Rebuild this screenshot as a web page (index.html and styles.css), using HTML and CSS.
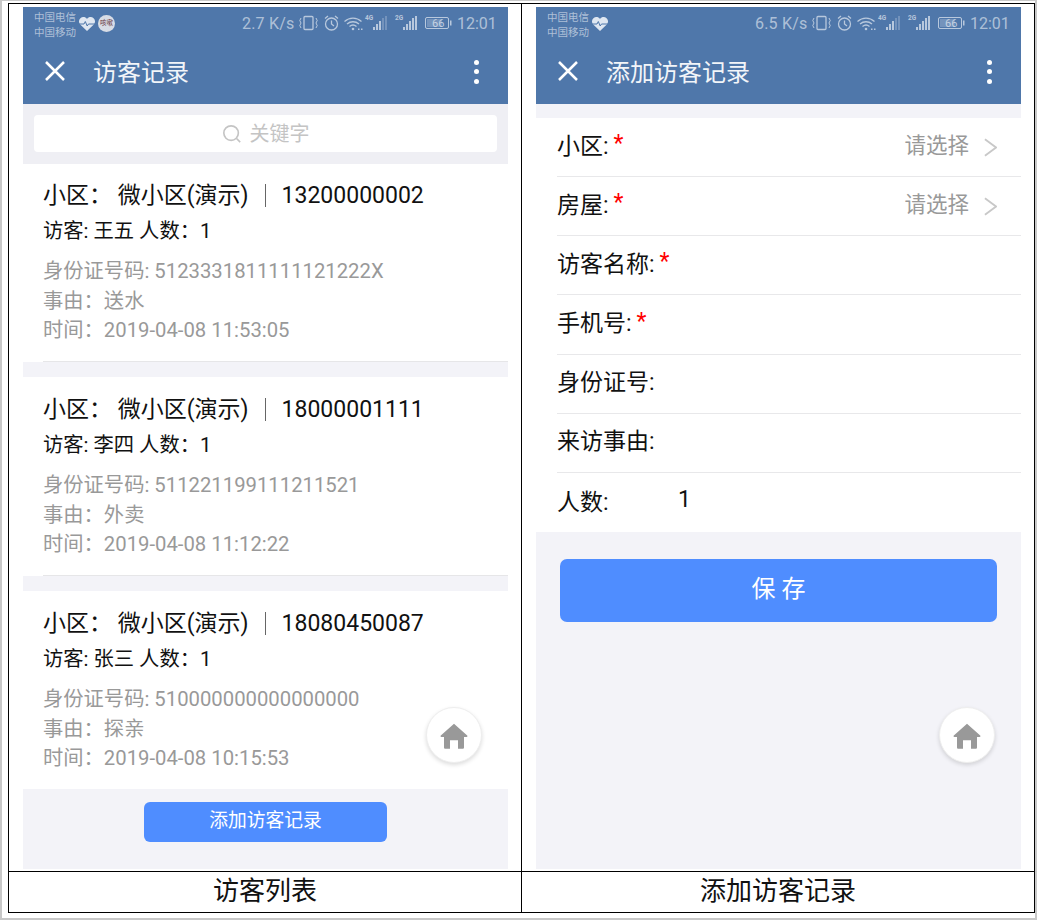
FILE: index.html
```html
<!DOCTYPE html>
<html lang="en">
<head>
    <meta charset="UTF-8">
    <meta name="viewport" content="width=device-width, initial-scale=1.0">
    <title>访客记录</title>
    <link rel="stylesheet" href="styles.css">
</head>
<body>
    <svg class="defs" width="0" height="0">
        <symbol id="i-heart" viewBox="0 0 16 14">
            <path d="M8 14 1.2 7.4C-.6 5.500-.3 2.600 1.400 1.200 3.400-.5 6.500-.2 8 2c1.500-2.200 4.600-2.500 6.600-.8 1.700 1.400 2 4.300.2 6.200z" fill="#dfe7f1"/>
            <path d="M0 7h5l1.300-2.500L8.200 9l1.300-2H16" fill="none" stroke="#4f77aa" stroke-width="1"/>
        </symbol>
        <symbol id="i-status" viewBox="0 0 153 20">
            <!-- vibrate -->
            <rect x="5" y="3.500" width="9" height="13" rx="1" fill="none" stroke="currentColor" stroke-width="1.300"/>
            <path d="M2 5 .8 7.500 2 10 .8 12.500 2 15M17 5l1.200 2.500L17 10l1.200 2.500L17 15" fill="none" stroke="currentColor"/>
            <!-- alarm -->
            <circle cx="32.500" cy="11" r="6" fill="none" stroke="currentColor" stroke-width="1.300"/>
            <path d="M32.500 7.500V11l2.500 2M26 5.500 29 3M39 5.500 36 3" fill="none" stroke="currentColor" stroke-width="1.300"/>
            <!-- wifi -->
            <path d="M45.500 8.500c5-4.500 12-4.500 17 0M48 11c3.500-3 8.500-3 12 0M50.500 13.500c2-1.700 5-1.700 7 0" fill="none" stroke="currentColor" stroke-width="1.300"/>
            <circle cx="54" cy="16" r="1.300" fill="currentColor"/>
            <path d="M59 15.500h1.500v1.500H59zM62 15.500h1.500v1.500H62z" fill="currentColor"/>
            <!-- 4G signal -->
            <path d="M74 14h2v3h-2zM77 11h2v6h-2zM80 8h2v9h-2z" fill="currentColor"/>
            <path d="M83 5h2v12h-2zM86 3h2v14h-2z" fill="currentColor" opacity=".35"/>
            <!-- 2G signal -->
            <path d="M104 14h2v3h-2zM107 11h2v6h-2zM110 8h2v9h-2zM113 5h2v12h-2zM116 3h2v14h-2z" fill="currentColor"/>
            <!-- battery -->
            <rect x="126.500" y="4.500" width="23" height="11" rx="1.500" fill="none" stroke="currentColor"/>
            <rect x="128" y="6" width="15" height="8" fill="currentColor" opacity=".35"/>
            <rect x="151" y="7.500" width="1.500" height="5" fill="currentColor"/>
        </symbol>
        <symbol id="i-home" viewBox="0 0 28 26">
            <path d="M14 .8 27.200 12.600c.6.600.2 1.400-.6 1.400H24v10.500c0 .8-.6 1.300-1.300 1.300H18v-8.500h-8v8.500H5.300C4.600 25.800 4 25.300 4 24.500V14H1.400c-.8 0-1.200-.8-.6-1.400z" fill="#999"/>
        </symbol>
    </svg>

    <div class="sheet">
        <!-- 访客列表 -->
        <div class="cell">
            <div class="phone">
                <div class="appbar">
                    <div class="statusbar">
                        <div class="carrier"><span>中国电信</span><span>中国移动</span></div>
                        <svg class="heart"><use href="#i-heart"/></svg>
                        <span class="cough">咳嗽</span>
                        <span class="speed">2.7 K/s</span>
                        <svg class="status-icons" viewBox="0 0 153 20">
                            <use href="#i-status"/>
                            <text x="66" y="7" class="net-label">4G</text>
                            <text x="96" y="7" class="net-label">2G</text>
                            <text x="133" y="14" class="batt-label">66</text>
                        </svg>
                        <span class="clock">12:01</span>
                    </div>
                    <div class="navbar">
                        <svg class="close" viewBox="0 0 22 22"><path d="M2 2l18 18M20 2 2 20"/></svg>
                        <span class="nav-title">访客记录</span>
                        <span class="dots"><i></i><i></i><i></i></span>
                    </div>
                </div>
                <div class="search-wrap">
                    <div class="search">
                        <svg class="search-icon" viewBox="0 0 22 22"><circle cx="10" cy="10" r="8"/><path d="M16 16l4 4"/></svg>
                        关键字
                    </div>
                </div>
                <div class="record first">
                    <div class="rec-title">小区： 微小区(演示)<span class="sep"></span>13200000002</div>
                    <div class="rec-sub">访客: 王五 人数：1</div>
                    <div class="rec-info">身份证号码: 5123331811111121222X</div>
                    <div class="rec-info">事由：送水</div>
                    <div class="rec-info">时间：2019-04-08 11:53:05</div>
                </div>
                <div class="record">
                    <div class="rec-title">小区： 微小区(演示)<span class="sep"></span>18000001111</div>
                    <div class="rec-sub">访客: 李四 人数：1</div>
                    <div class="rec-info">身份证号码: 511221199111211521</div>
                    <div class="rec-info">事由：外卖</div>
                    <div class="rec-info">时间：2019-04-08 11:12:22</div>
                </div>
                <div class="record last">
                    <div class="rec-title">小区： 微小区(演示)<span class="sep"></span>18080450087</div>
                    <div class="rec-sub">访客: 张三 人数：1</div>
                    <div class="rec-info">身份证号码: 510000000000000000</div>
                    <div class="rec-info">事由：探亲</div>
                    <div class="rec-info">时间：2019-04-08 10:15:53</div>
                </div>
                <div class="add-wrap"><button class="add-btn">添加访客记录</button></div>
                <div class="home-btn"><svg><use href="#i-home"/></svg></div>
            </div>
        </div>

        <!-- 添加访客记录 -->
        <div class="cell">
            <div class="phone">
                <div class="appbar">
                    <div class="statusbar">
                        <div class="carrier"><span>中国电信</span><span>中国移动</span></div>
                        <svg class="heart"><use href="#i-heart"/></svg>
                        <span class="speed">6.5 K/s</span>
                        <svg class="status-icons" viewBox="0 0 153 20">
                            <use href="#i-status"/>
                            <text x="66" y="7" class="net-label">4G</text>
                            <text x="96" y="7" class="net-label">2G</text>
                            <text x="133" y="14" class="batt-label">66</text>
                        </svg>
                        <span class="clock">12:01</span>
                    </div>
                    <div class="navbar">
                        <svg class="close" viewBox="0 0 22 22"><path d="M2 2l18 18M20 2 2 20"/></svg>
                        <span class="nav-title">添加访客记录</span>
                        <span class="dots"><i></i><i></i><i></i></span>
                    </div>
                </div>
                <div class="form">
                    <div class="form-row">
                        <span>小区:</span><span class="req">*</span>
                        <span class="pick">请选择</span>
                        <svg class="chevron" viewBox="0 0 14 22"><path d="M1 2l12 9-12 9"/></svg>
                    </div>
                    <div class="form-row">
                        <span>房屋:</span><span class="req">*</span>
                        <span class="pick">请选择</span>
                        <svg class="chevron" viewBox="0 0 14 22"><path d="M1 2l12 9-12 9"/></svg>
                    </div>
                    <div class="form-row"><span>访客名称:</span><span class="req">*</span></div>
                    <div class="form-row"><span>手机号:</span><span class="req">*</span></div>
                    <div class="form-row"><span>身份证号:</span></div>
                    <div class="form-row"><span>来访事由:</span></div>
                    <div class="form-row"><span class="count-label">人数:</span><span>1</span></div>
                </div>
                <button class="save-btn">保 存</button>
                <div class="home-btn"><svg><use href="#i-home"/></svg></div>
            </div>
        </div>

        <div class="caption">访客列表</div>
        <div class="caption">添加访客记录</div>
    </div>
</body>
</html>
```

FILE: styles.css
```css
/* Base */
body {
    margin: 0;
    height: 920px;
    box-sizing: border-box;
    overflow: hidden;
    background: #fff;
    border: solid #c8c8c8;
    border-width: 1px 2px 2px 2px;
    padding: 2px 0 0 6px;
    font-family: Roboto, "Noto Sans CJK SC", sans-serif;
    color: #111;
}

.defs {
    position: absolute;
}

/* Outer table */
.sheet {
    width: 1027px;
    box-sizing: border-box;
    border: 1px solid #000;
    display: grid;
    grid-template-columns: 513px 512px;
    grid-template-rows: 868px 40px;
}

.cell {
    padding: 3px 0 0 14px;
    border-right: 1px solid #000;
    border-bottom: 1px solid #000;
}

.cell:nth-child(2) {
    border-right: none;
}

.caption {
    text-align: center;
    font-size: 26px;
    line-height: 38px;
    border-right: 1px solid #000;
}

.caption:last-child {
    border-right: none;
}

/* Phone */
.phone {
    position: relative;
    width: 485px;
    height: 862px;
    background: #f3f3f8;
    display: flex;
    flex-direction: column;
}

.appbar {
    background: #4f77aa;
    height: 97px;
    flex-shrink: 0;
}

.statusbar {
    height: 38px;
    display: flex;
    align-items: center;
    padding-left: 11px;
    color: rgba(255, 255, 255, 0.55);
}

.carrier {
    display: flex;
    flex-direction: column;
    font-size: 10.500px;
    line-height: 15px;
    width: 45px;
    margin-bottom: 2px;
}

.heart {
    width: 16px;
    height: 14px;
    margin-bottom: 4px;
}

.cough {
    width: 17px;
    height: 17px;
    margin-left: 3px;
    margin-bottom: 6px;
    border-radius: 50%;
    background: #d8dde6;
    color: #6a3a44;
    font-size: 6.500px;
    line-height: 17px;
    text-align: center;
    white-space: nowrap;
}

.speed {
    position: absolute;
    left: 219px;
    top: 7px;
    font-size: 16px;
    line-height: 20px;
    letter-spacing: 0.200px;
}

.status-icons {
    position: absolute;
    left: 276px;
    top: 6px;
    width: 153px;
    height: 20px;
    color: rgba(255, 255, 255, 0.6);
}

.net-label {
    font-size: 6.500px;
    font-weight: 700;
    fill: currentColor;
}

.batt-label {
    font-size: 11px;
    fill: currentColor;
}

.clock {
    position: absolute;
    left: 434px;
    top: 7px;
    font-size: 16px;
    line-height: 20px;
}

.navbar {
    height: 59px;
    box-sizing: border-box;
    padding: 0 0 8px 21px;
    display: flex;
    align-items: center;
    color: #fff;
}

.close {
    width: 22px;
    height: 22px;
    margin-right: 27px;
    fill: none;
    stroke: #fff;
    stroke-width: 2.500px;
}

.nav-title {
    font-size: 24px;
    color: #f2f5f9;
}

.dots {
    margin: 2px 29px 0 auto;
    display: flex;
    flex-direction: column;
    gap: 4.500px;
}

.dots i {
    width: 5px;
    height: 5px;
    border-radius: 50%;
    background: #fff;
}

/* Search */
.search-wrap {
    background: #efeff4;
    padding: 11px 11px 12px 11px;
    flex-shrink: 0;
}

.search {
    height: 37px;
    box-sizing: border-box;
    padding-bottom: 2px;
    background: #fff;
    border-radius: 4px;
    display: flex;
    align-items: center;
    justify-content: center;
    color: #c4c4c4;
    font-size: 20px;
}

.search-icon {
    width: 20px;
    height: 20px;
    margin: 2px 8px 0 0;
    fill: none;
    stroke: #c4c4c4;
    stroke-width: 1.800px;
}

/* Records */
.record {
    position: relative;
    height: 199px;
    box-sizing: border-box;
    margin-bottom: 15px;
    padding: 16px 0 0 20px;
    background: #fff;
    flex-shrink: 0;
}

.record::after {
    content: "";
    position: absolute;
    left: 20px;
    right: 0;
    bottom: 0;
    border-bottom: 1px solid #e6e6e8;
}

.record.first {
    height: 198px;
    padding-top: 15px;
}

.record.last {
    height: 198px;
    margin-bottom: 0;
}

.record.last::after {
    display: none;
}

.rec-title {
    font-size: 23px;
    line-height: 33px;
    display: flex;
    align-items: center;
    white-space: pre;
}

.sep {
    width: 1px;
    height: 23px;
    background: #666;
    margin: 0 16px;
}

.rec-sub {
    font-size: 20.300px;
    line-height: 36px;
    margin-top: 1px;
    margin-bottom: 8px;
}

.rec-info {
    font-size: 20.300px;
    line-height: 29.500px;
    color: #999;
}

.add-wrap {
    padding-top: 13px;
    display: flex;
    justify-content: center;
}

button {
    font-family: inherit;
    border: none;
    color: #fff;
    background: #4f8dff;
}

.add-btn {
    width: 243px;
    height: 40px;
    padding: 0 0 8px;
    border-radius: 6px;
    font-size: 18.800px;
}

/* Form */
.form {
    margin-top: 14px;
    background: #fff;
    flex-shrink: 0;
}

.form-row {
    height: 59.170px;
    box-sizing: border-box;
    margin-left: 21px;
    padding-bottom: 7px;
    display: flex;
    align-items: center;
    font-size: 23px;
    border-bottom: 1px solid #e8e8ea;
}

.form-row:last-child {
    border-bottom: none;
    padding-bottom: 6px;
}

.req {
    color: #f00;
    margin-left: 5px;
}

.pick {
    margin-left: auto;
    color: #999;
    font-size: 21.500px;
}

.chevron {
    width: 13px;
    height: 21px;
    margin: 7px 24px 0 15px;
    fill: none;
    stroke: #c8c8c8;
    stroke-width: 2px;
}

.count-label {
    width: 121px;
}

.save-btn {
    width: 437px;
    height: 63px;
    margin: 27px 0 0 24px;
    padding: 0 0 8px;
    border-radius: 7px;
    font-size: 24px;
    flex-shrink: 0;
}

/* Floating home */
.home-btn {
    position: absolute;
    left: 403px;
    top: 700px;
    width: 56px;
    height: 56px;
    box-sizing: border-box;
    border-radius: 50%;
    background: #fff;
    border: 1px solid #eee;
    box-shadow: 0 2px 4px rgba(0, 0, 0, 0.14);
    display: flex;
    align-items: center;
    justify-content: center;
}

.home-btn svg {
    width: 28px;
    height: 26px;
    margin-top: 1px;
}
```
